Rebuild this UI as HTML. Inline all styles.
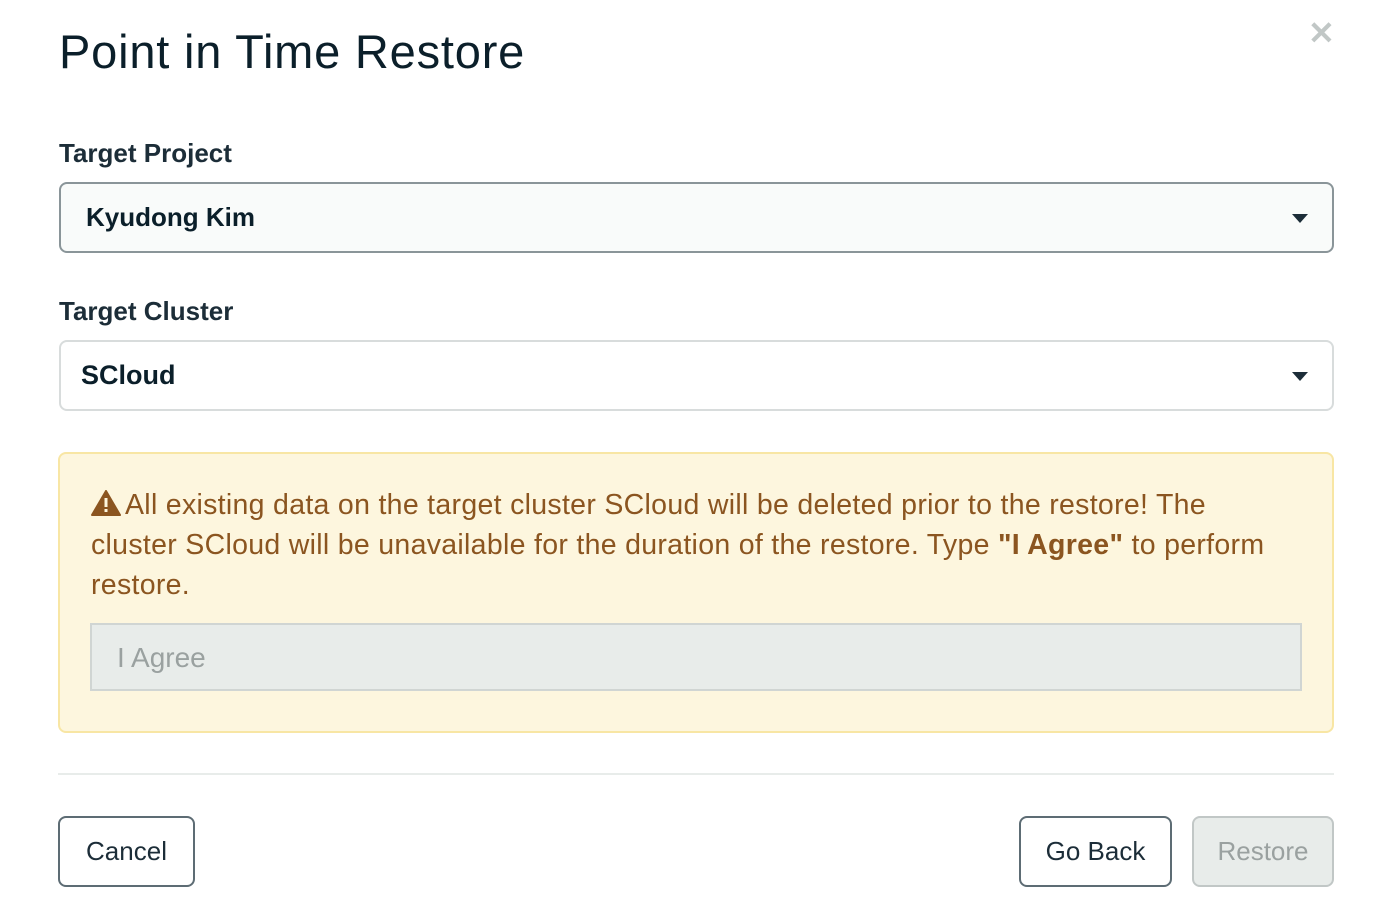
<!DOCTYPE html>
<html><head><style>
*{box-sizing:border-box;margin:0;padding:0}
body{width:1390px;height:916px;background:#fff;font-family:"Liberation Sans",sans-serif;position:relative;overflow:hidden;color:#1c2d38}
.abs{position:absolute}
h1{position:absolute;left:59px;top:24px;font-size:47px;font-weight:400;color:#0b1f2a;letter-spacing:0.8px}
.lbl{position:absolute;left:59px;font-size:26px;font-weight:700;color:#1c2d38}
.sel{position:absolute;left:59px;width:1275px;height:71px;border-radius:8px;font-size:26px;font-weight:700;color:#0b1f2a;display:flex;align-items:center}
.caret{position:absolute;right:24px;top:30px;width:0;height:0;border-left:8px solid transparent;border-right:8px solid transparent;border-top:9px solid #1c2d38}
.btn{position:absolute;top:816px;height:71px;border:2px solid #5d6c74;border-radius:8px;font-size:26px;display:flex;align-items:center;justify-content:center;color:#1c2d38;background:#fff}
</style></head><body>
<h1>Point in Time Restore</h1>
<div class="abs" style="left:1308px;top:14px;font-size:32px;color:#c1c7c6;font-weight:700">✕</div>
<div class="lbl" style="top:138px">Target Project</div>
<div class="sel" style="top:182px;background:#f9fbfa;border:2px solid #8a9599;padding-left:25px">Kyudong Kim<div class="caret" style="top:30px"></div></div>
<div class="lbl" style="top:296px">Target Cluster</div>
<div class="sel" style="top:340px;background:#fff;border:2px solid #d8dcdc;padding-left:20px;font-size:27px">SCloud<div class="caret"></div></div>
<div class="abs" style="left:58px;top:452px;width:1276px;height:281px;background:#fdf6de;border:2px solid #f8e6a4;border-radius:8px"></div>
<div class="abs" style="left:91px;top:485px;width:1230px;font-size:28.5px;letter-spacing:0.3px;line-height:40px;color:#8b5520;white-space:nowrap">
<svg width="30" height="26" viewBox="0 0 30 26" style="vertical-align:-2px;margin-right:4px"><path d="M15 1 L29 25 L1 25 Z" fill="#8b5520" stroke="#8b5520" stroke-width="2" stroke-linejoin="round"/><rect x="13.5" y="8" width="3" height="9" fill="#fdf6de"/><rect x="13.5" y="19" width="3" height="3" fill="#fdf6de"/></svg>All existing data on the target cluster SCloud will be deleted prior to the restore! The<br>cluster SCloud will be unavailable for the duration of the restore. Type <b>"I Agree"</b> to perform<br>restore.</div>
<div class="abs" style="left:90px;top:623px;width:1212px;height:68px;background:#e8ecea;border:2px solid #d0d5d3;font-size:28px;color:#9aa1a0;padding-left:25px;line-height:66px">I Agree</div>
<div class="abs" style="left:58px;top:773px;width:1276px;height:2px;background:#e8ecea"></div>
<div class="btn" style="left:58px;width:137px">Cancel</div>
<div class="btn" style="left:1019px;width:153px">Go Back</div>
<div class="btn" style="left:1192px;width:142px;background:#e8ecea;border-color:#c1c7c6;color:#9aa1a0">Restore</div>
</body></html>
